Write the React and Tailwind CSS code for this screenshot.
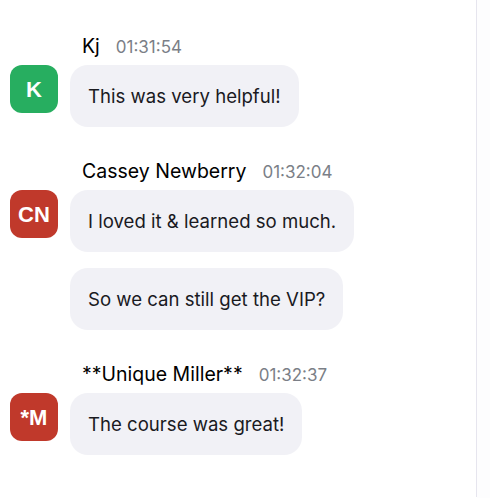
import React from "react";

const groups = [
  {
    name: "Kj",
    time: "01:31:54",
    initials: "K",
    color: "bg-[#27ae60]",
    messages: ["This was very helpful!"],
  },
  {
    name: "Cassey Newberry",
    time: "01:32:04",
    initials: "CN",
    color: "bg-[#c0392b]",
    messages: ["I loved it & learned so much.", "So we can still get the VIP?"],
  },
  {
    name: "**Unique Miller**",
    time: "01:32:37",
    initials: "*M",
    color: "bg-[#c0392b]",
    messages: ["The course was great!"],
  },
];

export default function App() {
  return (
    <div
      className="flex h-[498px] w-[490px] bg-white"
      style={{ fontFamily: "Inter, 'Noto Sans', sans-serif" }}
    >
      <div className="flex w-[476px] flex-col gap-8 pl-[10px] pt-[34px]">
        {groups.map((g) => (
          <div key={g.name} className="flex flex-col">
            <div className="mb-[7px] flex h-6 items-baseline gap-4 pl-[72px] leading-6">
              <span className="text-[19.5px] font-normal text-black">{g.name}</span>
              <span className="text-[17px] text-[#7b7f87]">{g.time}</span>
            </div>
            <div className="flex flex-col gap-4">
              {g.messages.map((m, i) => (
                <div key={m} className="flex items-start gap-3">
                  {i === 0 ? (
                    <div
                      className={`flex h-12 w-12 shrink-0 items-center justify-center rounded-xl text-[22px] font-bold text-white ${g.color}`}
                      style={{ fontFamily: "'Liberation Sans', Arial, sans-serif" }}
                    >
                      {g.initials}
                    </div>
                  ) : (
                    <div className="h-12 w-12 shrink-0" />
                  )}
                  <div className="h-[62px] rounded-[18px] bg-[#f1f1f6] px-[18px] py-[18px] text-[18.6px] leading-[26px] text-[#1a1a1f]">
                    {m}
                  </div>
                </div>
              ))}
            </div>
          </div>
        ))}
      </div>
      <div className="h-[497px] w-px bg-[#e6e5ee]" />
      <div className="flex-1 bg-[#fdfdfe]" />
    </div>
  );
}
